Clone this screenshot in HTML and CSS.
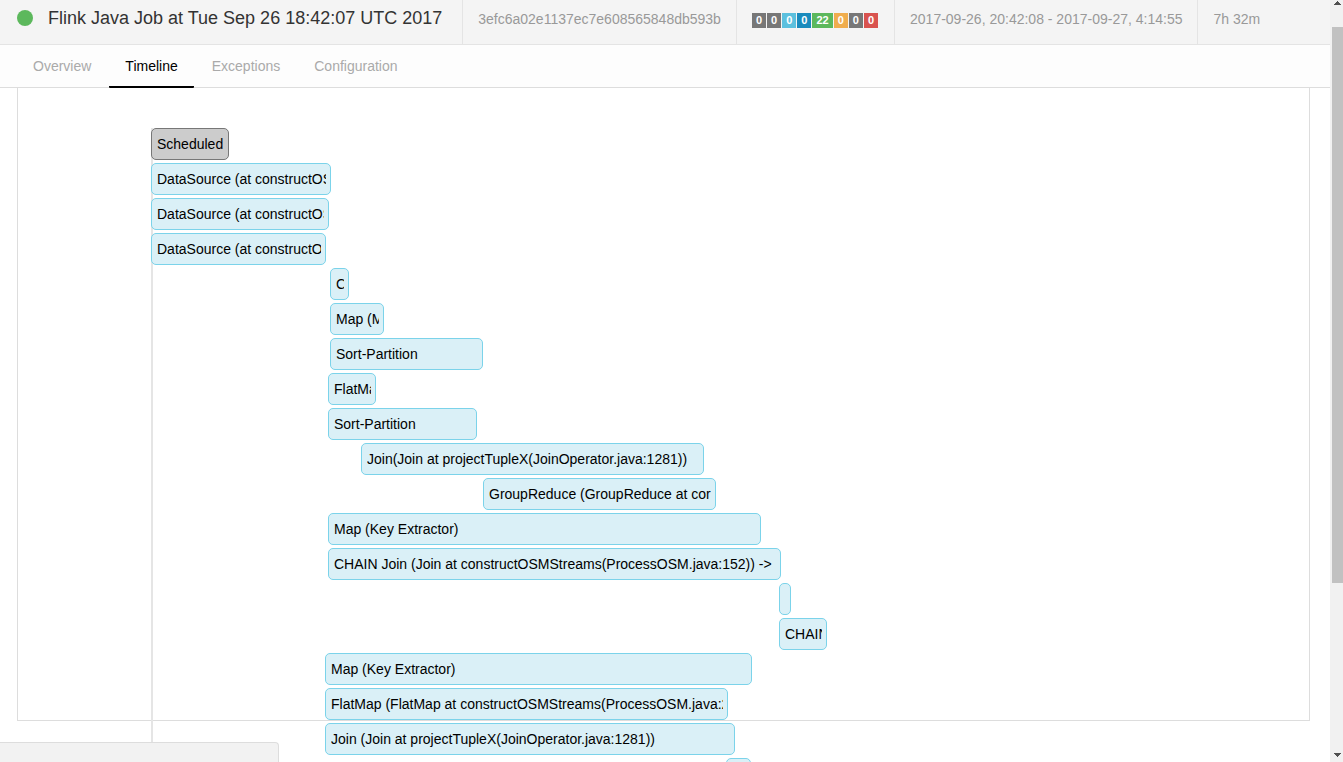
FILE: index.html
```
<!DOCTYPE html>
<html lang="en">
<head>
<meta charset="utf-8">
<title>Flink Java Job - Timeline</title>
<link rel="stylesheet" href="styles.css">
</head>
<body>
<div class="app">
  <div class="page">
    <header class="job-bar">
      <h1 class="job-name"><span class="status-dot"></span>Flink Java Job at Tue Sep 26 18:42:07 UTC 2017</h1>
      <div class="job-cell">3efc6a02e1137ec7e608565848db593b</div>
      <div class="job-cell counts">
        <span class="count">0</span><span class="count">0</span><span class="count info">0</span><span class="count primary">0</span><span class="count success">22</span><span class="count warning">0</span><span class="count">0</span><span class="count danger">0</span>
      </div>
      <div class="job-cell">2017-09-26, 20:42:08 - 2017-09-27, 4:14:55</div>
      <div class="job-cell">7h 32m</div>
    </header>
    <nav class="tabs">
      <a class="tab" href="#overview">Overview</a>
      <a class="tab active" href="#timeline" aria-current="page">Timeline</a>
      <a class="tab" href="#exceptions">Exceptions</a>
      <a class="tab" href="#configuration">Configuration</a>
    </nav>
    <main class="content">
      <section class="panel">
        <div class="timeline">
          <div class="bar scheduled" style="--start:0;--span:78"><span class="label">Scheduled</span></div>
          <div class="bar" style="--start:0;--span:180"><span class="label">DataSource (at constructOS</span></div>
          <div class="bar" style="--start:0;--span:178"><span class="label">DataSource (at constructOS</span></div>
          <div class="bar" style="--start:0;--span:175"><span class="label">DataSource (at constructO</span></div>
          <div class="bar" style="--start:179;--span:19"><span class="label">C</span></div>
          <div class="bar" style="--start:179;--span:54"><span class="label">Map (M</span></div>
          <div class="bar" style="--start:179;--span:153"><span class="label">Sort-Partition</span></div>
          <div class="bar" style="--start:177;--span:48"><span class="label">FlatMa</span></div>
          <div class="bar" style="--start:177;--span:149"><span class="label">Sort-Partition</span></div>
          <div class="bar" style="--start:210;--span:343"><span class="label">Join(Join at projectTupleX(JoinOperator.java:1281))</span></div>
          <div class="bar" style="--start:332;--span:233"><span class="label">GroupReduce (GroupReduce at cor</span></div>
          <div class="bar" style="--start:177;--span:433"><span class="label">Map (Key Extractor)</span></div>
          <div class="bar" style="--start:177;--span:453"><span class="label">CHAIN Join (Join at constructOSMStreams(ProcessOSM.java:152)) -&gt;</span></div>
          <div class="bar" style="--start:628;--span:12"></div>
          <div class="bar" style="--start:628;--span:48"><span class="label">CHAIN</span></div>
          <div class="bar" style="--start:174;--span:427"><span class="label">Map (Key Extractor)</span></div>
          <div class="bar" style="--start:174;--span:403"><span class="label">FlatMap (FlatMap at constructOSMStreams(ProcessOSM.java:2</span></div>
          <div class="bar" style="--start:174;--span:410"><span class="label">Join (Join at projectTupleX(JoinOperator.java:1281))</span></div>
          <div class="bar" style="--start:575;--span:25"></div>
        </div>
      </section>
    </main>
  </div>
  <div class="scrollbar" aria-hidden="true">
    <svg class="arrow" viewBox="0 0 7 4"><path d="M3 0h1v1h1v1h1v1h1v1H0V3h1V2h1V1h1z"/></svg>
    <div class="thumb"></div>
    <svg class="arrow" viewBox="0 0 7 4"><path d="M0 0h7v1H6v1H5v1H4v1H3V3H2V2H1V1H0z"/></svg>
  </div>
  <div class="status-bubble"></div>
</div>
</body>
</html>
```
FILE: styles.css
```
* { box-sizing: border-box; }
body {
  margin: 0;
  background: #fff;
  color: #333;
  font: 14px/20px "Liberation Sans", Arial, sans-serif;
}
.app {
  position: relative;
  display: grid;
  grid-template-columns: minmax(0, 1fr) 13px;
  height: 100vh;
  overflow: hidden;
}
.page {
  display: flex;
  flex-direction: column;
  min-height: 0;
}
.job-bar {
  display: flex;
  flex: none;
  background: #f4f4f4;
  border-bottom: 1px solid #e4e4e4;
  white-space: nowrap;
}
.job-name {
  display: flex;
  align-items: center;
  margin: 0;
  padding: 0 20px 8px 17px;
  font-size: 18px;
  font-weight: 400;
}
.status-dot {
  width: 16px;
  height: 16px;
  margin-right: 15px;
  border-radius: 50%;
  background: #5cb85c;
}
.job-cell {
  padding: 9px 15px 15px;
  border-left: 1px solid #e4e4e4;
  color: #999;
}
.counts {
  display: flex;
  align-items: center;
  gap: 1px;
  padding-top: 11px;
  padding-right: 16px;
}
.count {
  padding: 0 4px;
  background: #777;
  color: #fff;
  font-size: 11px;
  font-weight: 700;
  line-height: 15px;
}
.info { background: #5bc0de; }
.primary { background: #1a8bbd; }
.success { background: #5cb85c; }
.warning { background: #f0ad4e; }
.danger { background: #d9534f; }
.tabs {
  display: flex;
  flex: none;
  gap: 2px;
  padding-left: 17px;
  background: #fdfdfd;
  border-bottom: 1px solid #ddd;
}
.tab {
  margin-bottom: -1px;
  padding: 11px 16px 10px;
  border-bottom: 2px solid transparent;
  color: #aaa;
  text-decoration: none;
}
.tab.active {
  border-color: #000;
  border-radius: 1px;
  color: #000;
}
.content {
  display: flex;
  flex: 1;
  min-height: 0;
  padding: 0 20px 41px 17px;
}
.panel {
  flex: 1;
  min-width: 0;
  padding: 40px 0 0 133px;
  border: 1px solid #ddd;
  border-top: 0;
}
.timeline {
  display: flex;
  flex-direction: column;
  gap: 3px;
  box-shadow: inset 2px 0 #e5e5e5;
}
.bar {
  flex: none;
  height: 32px;
  margin-left: calc(var(--start) * 100% / 1158);
  width: calc(var(--span) * 100% / 1158);
  padding: 0 4px 0 5px;
  border: 1px solid #7bd3ea;
  border-radius: 5px;
  background: #daf0f7;
  color: #000;
}
.scheduled {
  border-color: #777;
  background: #ccc;
}
.label {
  display: block;
  overflow: hidden;
  line-height: 30px;
  white-space: nowrap;
}
.scrollbar {
  display: flex;
  flex-direction: column;
  align-items: center;
  padding: 1px 0 5px 2px;
  background: #f1f1f1;
}
.arrow {
  width: 7px;
  height: 4px;
  fill: #505050;
}
.thumb {
  width: 100%;
  height: 73.5%;
  margin: 22px 0 auto;
  background: #c1c1c1;
}
.status-bubble {
  position: absolute;
  bottom: 0;
  left: 0;
  width: 279px;
  height: 20px;
  border: 1px solid #ddd;
  border-width: 1px 1px 0 0;
  border-radius: 0 4px 0 0;
  background: #f2f2f2;
}
```
